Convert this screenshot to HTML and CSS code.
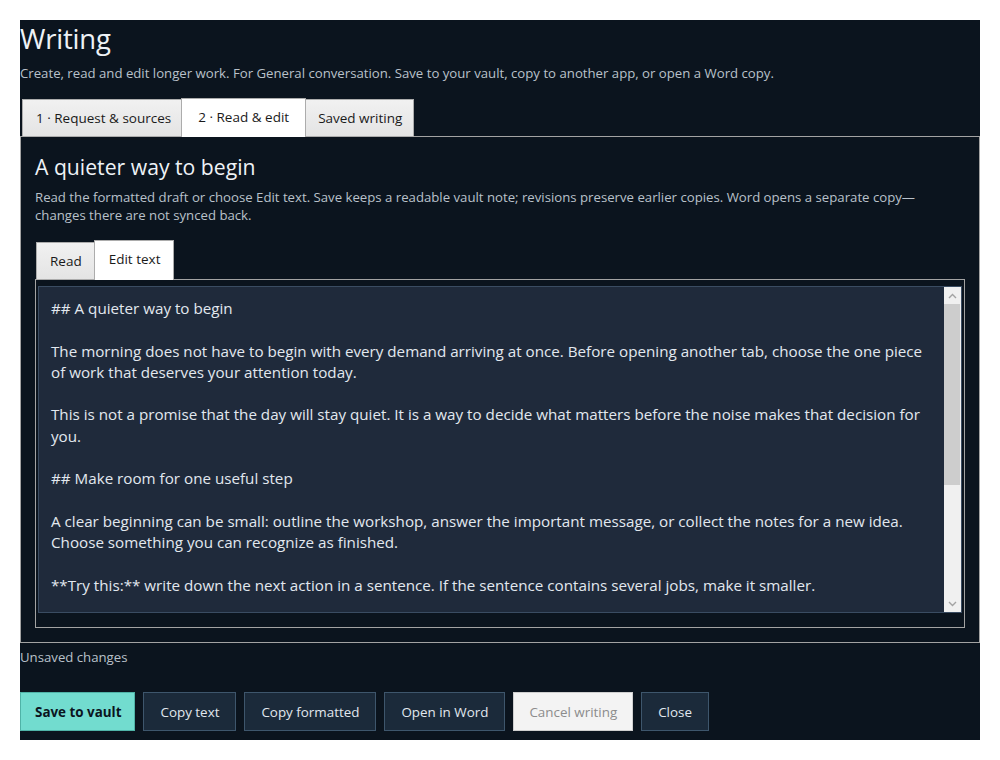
FILE: index.html
```html
<!DOCTYPE html>
<html lang="en">
<head>
<meta charset="utf-8">
<title>Writing</title>
<link rel="stylesheet" href="styles.css">
</head>
<body>
<div class="app">
  <h1 class="title">Writing</h1>
  <p class="subtitle">Create, read and edit longer work. For General conversation. Save to your vault, copy to another app, or open a Word copy.</p>
  <div class="tabs outer">
    <div class="tab first">1 · Request &amp; sources</div>
    <div class="tab active">2 · Read &amp; edit</div>
    <div class="tab">Saved writing</div>
  </div>
  <div class="tabpanel">
    <h2 class="draft-title">A quieter way to begin</h2>
    <p class="desc">Read the formatted draft or choose Edit text. Save keeps a readable vault note; revisions preserve earlier copies. Word opens a separate copy—<br>changes there are not synced back.</p>
    <div class="tabs inner">
      <div class="tab">Read</div>
      <div class="tab active">Edit text</div>
    </div>
    <div class="editpanel">
      <div class="editor-box">
        <textarea class="editor" wrap="off" spellcheck="false">## A quieter way to begin

The morning does not have to begin with every demand arriving at once. Before opening another tab, choose the one piece
of work that deserves your attention today.

This is not a promise that the day will stay quiet. It is a way to decide what matters before the noise makes that decision for
you.

## Make room for one useful step

A clear beginning can be small: outline the workshop, answer the important message, or collect the notes for a new idea.
Choose something you can recognize as finished.

**Try this:** write down the next action in a sentence. If the sentence contains several jobs, make it smaller.

## Let the rest wait

Messages, reminders and requests will still be there in an hour. Giving them a later place
in the day is a choice, not a failure.

When the first step is done, look again at the list and decide what comes next.

Begin quietly, and let the day catch up.</textarea>
        <div class="scrollbar" aria-hidden="true">
          <div class="sb-btn">
            <svg width="9" height="6" viewBox="0 0 9 6"><path d="M1 5 L4.5 1.5 L8 5" fill="none" stroke="#a3a3a3" stroke-width="1.4"/></svg>
          </div>
          <div class="sb-track">
            <div class="sb-thumb"></div>
          </div>
          <div class="sb-btn">
            <svg width="9" height="6" viewBox="0 0 9 6"><path d="M1 1 L4.5 4.5 L8 1" fill="none" stroke="#a3a3a3" stroke-width="1.4"/></svg>
          </div>
        </div>
      </div>
    </div>
  </div>
  <p class="status">Unsaved changes</p>
  <div class="actions">
    <button class="btn primary">Save to vault</button>
    <button class="btn">Copy text</button>
    <button class="btn">Copy formatted</button>
    <button class="btn">Open in Word</button>
    <button class="btn disabled">Cancel writing</button>
    <button class="btn">Close</button>
  </div>
</div>
</body>
</html>
```

FILE: styles.css
```css
html, body {
  margin: 0;
  padding: 0;
  background: #ffffff;
}

body {
  font-family: "Open Sans", "Noto Sans", sans-serif;
}

.app {
  margin: 20px;
  width: 960px;
  height: 720px;
  background: #0b141e;
  color: #e6ebf0;
  box-sizing: border-box;
  display: flex;
  flex-direction: column;
}

.title {
  margin: 0;
  font-size: 27.5px;
  font-weight: 400;
  line-height: 38px;
  color: #eef2f6;
  letter-spacing: -0.2px;
}

.subtitle {
  margin: 6px 0 0;
  font-size: 13.2px;
  line-height: 18px;
  color: #b9c1ca;
}

.tabs {
  display: flex;
  align-items: flex-end;
  position: relative;
  z-index: 1;
  margin-bottom: -1px;
}

.tabs.outer {
  margin-top: 16px;
  padding-left: 2px;
  height: 39px;
}

.tab {
  box-sizing: border-box;
  height: 38px;
  padding: 0 11px 0 12px;
  display: flex;
  align-items: center;
  font-size: 13.5px;
  color: #1a1a1a;
  background: linear-gradient(#f1f1f1, #e4e4e4);
  border: 1px solid #acacac;
  border-right: none;
}

.tab:last-child {
  border-right: 1px solid #acacac;
}

.tab.first {
  padding: 0 10px 0 13px;
}

.tab.active {
  height: 39px;
  padding: 0 16px 2px;
  background: #ffffff;
  border: 1px solid #acacac;
  border-bottom: none;
}

.tab.active + .tab {
  border-left: none;
}

.tabpanel {
  border: 1px solid #a3a3a3;
  padding: 15px 14px 14px 14px;
  height: 507px;
  box-sizing: border-box;
  display: flex;
  flex-direction: column;
}

.draft-title {
  margin: 0;
  font-size: 21.2px;
  font-weight: 400;
  line-height: 30px;
  color: #eef2f6;
}

.desc {
  margin: 6px 0 0;
  font-size: 13.2px;
  line-height: 18px;
  color: #b9c1ca;
}

.tabs.inner {
  margin-top: 16px;
  padding-left: 1px;
  height: 40px;
}

.inner .tab {
  padding: 0 12px 0 13px;
}

.inner .tab.active {
  height: 40px;
  padding: 0 13px 3px 14px;
}

.editpanel {
  flex: 1;
  border: 1px solid #a3a3a3;
  padding: 6px 2px 14px 2px;
  display: flex;
}

.editor-box {
  flex: 1;
  display: flex;
  background: #1f2a3b;
  border: 1px solid #3a4c62;
  min-width: 0;
}

.editor {
  flex: 1;
  min-width: 0;
  margin: 0;
  resize: none;
  box-sizing: border-box;
  background: transparent;
  color: #e2e8ef;
  border: none;
  padding: 11px 6px 10px 12px;
  font-family: "Open Sans", "Noto Sans", sans-serif;
  font-size: 15.2px;
  line-height: 21.3px;
  outline: none;
  overflow: hidden;
  white-space: pre;
}

.scrollbar {
  width: 17px;
  display: flex;
  flex-direction: column;
  background: #f0f0f0;
}

.sb-btn {
  height: 17px;
  display: flex;
  align-items: center;
  justify-content: center;
}

.sb-track {
  flex: 1;
  display: flex;
  flex-direction: column;
}

.sb-thumb {
  height: 181px;
  background: #cdcdcd;
  margin: 0 1px 0 0;
}

.status {
  margin: 5px 0 0;
  font-size: 13.2px;
  line-height: 18px;
  color: #b9c1ca;
}

.actions {
  display: flex;
  gap: 8px;
  margin-top: 26px;
}

.btn {
  height: 39px;
  box-sizing: border-box;
  padding: 0 16px;
  font-family: "Open Sans", "Noto Sans", sans-serif;
  font-size: 13.4px;
  color: #e1e8ef;
  background: #1b2a3a;
  border: 1px solid #3e566c;
  border-radius: 0;
}

.btn.primary {
  background: #72dccf;
  border-color: #4fb3a7;
  color: #0b141e;
  font-weight: 700;
  padding: 0 13px 0 14px;
}

.btn.disabled {
  background: #f3f3f3;
  border-color: #cfcfcf;
  color: #8c8c8c;
  padding: 0 15px;
}
```
